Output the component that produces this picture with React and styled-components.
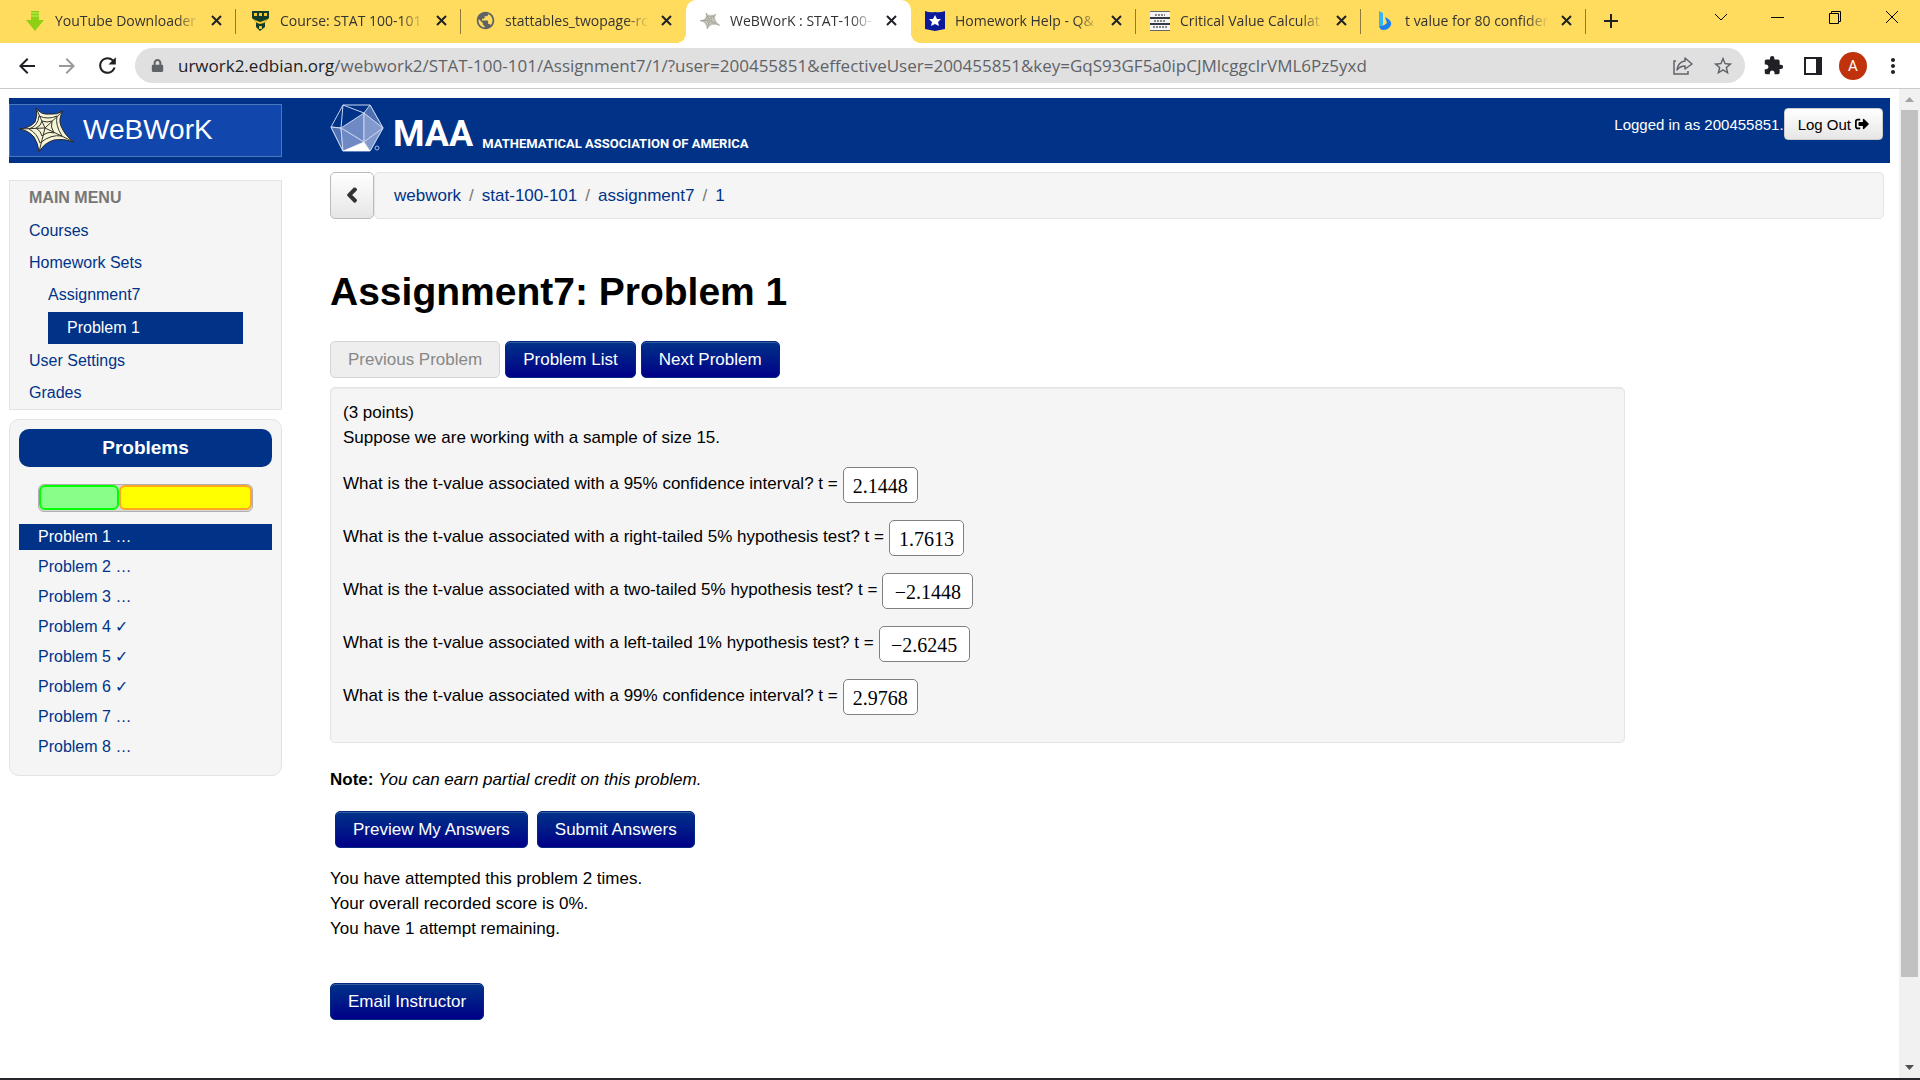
import React from 'react';
import styled, { createGlobalStyle, css } from 'styled-components';
import { FaChevronLeft, FaSignOutAlt, FaLock } from 'react-icons/fa';
import {
  MdArrowBack,
  MdArrowForward,
  MdRefresh,
  MdStarBorder,
  MdExtension,
  MdPublic,
  MdMoreVert,
  MdAdd
} from 'react-icons/md';

const GlobalStyle = createGlobalStyle`
  * {
    box-sizing: border-box;
  }
  body {
    margin: 0;
    background: white;
    color: black;
    font-family: 'Liberation Sans', Arial, sans-serif;
    font-size: 17px;
    line-height: 25px;
  }
  ul, ol, h1, h2, p {
    margin: 0;
    padding: 0;
    list-style: none;
  }
  a {
    color: #003388;
    text-decoration: none;
  }
  svg {
    display: block;
    flex-shrink: 0;
  }
`;

const Window = styled.div`
  display: flex;
  flex-direction: column;
  min-height: 100vh;
  border-bottom: 2px solid #26272b;
`;

/* Browser chrome */
const TabStrip = styled.div`
  display: flex;
  height: 43px;
  padding-left: 11px;
  background: #ffdc5e;
  font-family: 'Open Sans', sans-serif;
`;
const Tab = styled.div`
  position: relative;
  display: flex;
  align-items: center;
  flex: 0 1 225px;
  min-width: 0;
  padding: 0 11px 2px 14px;
  border-radius: 10px 10px 0 0;
  font-size: 14px;
  color: #333;
  ${props =>
    props.$active &&
    css`
      background: white;
      &::before,
      &::after {
        content: '';
        position: absolute;
        bottom: 0;
        width: 10px;
        height: 10px;
      }
      &::before {
        right: 100%;
        background: radial-gradient(circle at 0 0, transparent 10px, white 10px);
      }
      &::after {
        left: 100%;
        background: radial-gradient(
          circle at 100% 0,
          transparent 10px,
          white 10px
        );
      }
    `}
  ${props =>
    props.$divider &&
    css`
      &::after {
        content: '';
        position: absolute;
        right: 0;
        top: 9px;
        width: 1px;
        height: 25px;
        background: #8d7a38;
      }
    `}
`;
const TabIcon = styled.span`
  display: flex;
  justify-content: center;
  width: 20px;
  margin-right: 10px;
`;
const TabTitle = styled.span`
  flex: 1;
  min-width: 0;
  overflow: hidden;
  white-space: nowrap;
  mask-image: linear-gradient(to right, black 84%, transparent);
`;
const ChromeButton = styled.button`
  display: flex;
  align-items: center;
  justify-content: center;
  width: ${props => props.$width || 40}px;
  height: 34px;
  padding: 0;
  border: none;
  background: none;
  color: ${props => props.$color || '#202124'};
`;
const TabClose = styled(ChromeButton)`
  width: 18px;
  margin-left: 8px;
`;
const NewTab = styled(ChromeButton)`
  width: 50px;
  height: 42px;
`;
const WindowControls = styled.div`
  display: flex;
  margin-left: auto;
`;
const Toolbar = styled.div`
  display: flex;
  align-items: center;
  height: 46px;
  padding: 0 7px;
  border-bottom: 1px solid #c9c9c9;
`;
const AddressBar = styled.div`
  display: flex;
  align-items: center;
  flex: 1;
  min-width: 0;
  height: 35px;
  margin: 0 8px;
  padding: 0 2px 0 16px;
  border-radius: 18px;
  background: #e0e0e0;
  color: #5f6368;
`;
const Url = styled.span`
  flex: 1;
  min-width: 0;
  margin-left: 14px;
  overflow: hidden;
  white-space: nowrap;
  font-family: 'Open Sans', sans-serif;
  font-size: 17px;
  b {
    font-weight: 400;
    color: #202124;
  }
`;
const Avatar = styled.button`
  width: 28px;
  height: 28px;
  margin: 0 6px;
  padding: 0;
  border: none;
  border-radius: 50%;
  background: #c0320c;
  color: white;
  font-family: Roboto, sans-serif;
  font-size: 15px;
`;
const Viewport = styled.div`
  display: flex;
  flex: 1;
`;
const ScrollBar = styled.div`
  display: flex;
  flex-direction: column;
  align-items: center;
  width: 21px;
  background: #f1f1f1;
`;
const ScrollArrow = styled.span`
  display: flex;
  align-items: center;
  justify-content: center;
  height: 21px;
`;
const ScrollTrack = styled.div`
  flex: 1;
  width: 17px;
`;
const ScrollThumb = styled.div`
  height: 91.5%;
  background: #c1c1c1;
`;

/* Page */
const Page = styled.div`
  flex: 1;
  min-width: 0;
  padding: 9px 9px 0;
`;
const Masthead = styled.header`
  display: flex;
  height: 65px;
  padding-right: 7px;
  background: #003388;
`;
const Brand = styled.a`
  display: flex;
  align-items: center;
  align-self: center;
  gap: 8px;
  width: 273px;
  height: 53px;
  padding: 0 0 2px 9px;
  border: 1px solid #4a76bd;
  background: #1147ad;
  color: white;
  font-size: 28px;
`;
const Maa = styled.a`
  display: flex;
  align-items: flex-end;
  height: 54px;
  margin-left: 48px;
  color: white;
  font-family: Roboto, sans-serif;
  font-weight: 700;
`;
const MaaName = styled.span`
  margin: 0 9px 0 8px;
  font-size: 36px;
  line-height: 36px;
`;
const MaaTagline = styled.span`
  font-size: 13px;
  line-height: 17px;
  white-space: nowrap;
`;
const Session = styled.div`
  display: flex;
  align-items: center;
  height: 52px;
  margin-left: auto;
  color: white;
  font-size: 15px;
`;
const LogOut = styled.button`
  display: flex;
  align-items: center;
  gap: 4px;
  height: 32px;
  padding: 0 13px;
  border: 1px solid #ccc;
  border-radius: 4px;
  background: linear-gradient(to bottom, white, #e6e6e6);
  color: black;
  font-family: inherit;
  font-size: 15px;
`;
const Columns = styled.div`
  display: flex;
  gap: 48px;
`;
const Sidebar = styled.nav`
  display: flex;
  flex-direction: column;
  gap: 9px;
  flex: 0 0 273px;
  padding-top: 17px;
  font-size: 16px;
`;
const Panel = styled.section`
  border: 1px solid #e3e3e3;
  border-radius: ${props => (props.$rounded ? 10 : 0)}px;
  padding: ${props => (props.$rounded ? '9px 9px 15px' : 0)};
  background: #f5f5f5;
`;
const MenuTitle = styled.h2`
  padding-left: 19px;
  font-size: 16px;
  line-height: 34px;
  color: #777;
`;
const SubMenu = styled.ul`
  padding: ${props => (props.$deep ? '1px 0 0' : '0 0 1px')};
`;
const MenuLink = styled.a`
  display: block;
  margin-left: ${props => (props.$level ? 38 : 0)}px;
  margin-right: 38px;
  padding-left: ${props => (props.$level === 1 ? 0 : 19)}px;
  line-height: 32px;
  background: ${props => props.$active && '#003388'};
  color: ${props => props.$active && 'white'};
`;
const ProblemsTitle = styled.h2`
  border-radius: 10px;
  background: #003388;
  color: white;
  font-size: 19px;
  line-height: 38px;
  text-align: center;
`;
const Progress = styled.div`
  display: flex;
  height: 28px;
  margin: 17px 19px 12px;
  border: 1px solid #b0b0b0;
  border-radius: 6px;
  background: #d6d6d6;
`;
const ProgressPart = styled.div`
  height: 25px;
  border: 2px solid ${props => (props.$done ? '#00ff00' : '#ffa81f')};
  border-radius: 6px;
  background: ${props => (props.$done ? '#88ff88' : '#ffff00')};
`;
const ProblemLinks = styled.ul`
  display: flex;
  flex-direction: column;
  gap: 4px;
`;
const ProblemLink = styled.a`
  display: block;
  padding-left: 19px;
  line-height: 26px;
  background: ${props => props.$active && '#003388'};
  color: ${props => props.$active && 'white'};
`;
const Main = styled.main`
  flex: 1;
  min-width: 0;
  padding-top: 9px;
`;
const CrumbRow = styled.div`
  display: flex;
  height: 47px;
  padding-right: 6px;
`;
const BackButton = styled.button`
  display: flex;
  align-items: center;
  justify-content: center;
  width: 44px;
  padding: 0 0 2px;
  border: 1px solid #bbb;
  border-radius: 5px;
  background: linear-gradient(to bottom, white, #e6e6e6);
  color: #333;
`;
const Crumbs = styled.ol`
  display: flex;
  align-items: center;
  flex: 1;
  padding-left: 19px;
  border: 1px solid #e3e3e3;
  border-radius: 5px;
  background: #f5f5f5;
  li + li::before {
    content: '/';
    padding: 0 8px;
    color: #777;
  }
`;
const Title = styled.h1`
  margin: 48px 0 24px;
  font-size: 39px;
  line-height: 50px;
`;
const ButtonRow = styled.div`
  display: flex;
  gap: ${props => props.$gap || 5}px;
  padding-left: ${props => props.$indent || 0}px;
`;
const Button = styled.button`
  height: 37px;
  padding: 0 17px;
  border: 1px solid #002a80;
  border-radius: 5px;
  background: linear-gradient(to bottom, #003388, #000088);
  box-shadow: inset 0 1px 0 rgba(255, 255, 255, 0.2);
  color: white;
  font-family: inherit;
  font-size: 17px;
  line-height: 25px;
  &:disabled {
    border-color: #d4d4d4;
    background: #eee;
    box-shadow: none;
    color: #888;
  }
`;
const Well = styled.div`
  width: 83%;
  margin-top: 9px;
  padding: 12px 12px 27px;
  border: 1px solid #e3e3e3;
  border-radius: 5px;
  background: #f5f5f5;
  box-shadow: inset 0 1px 1px rgba(0, 0, 0, 0.05);
`;
const Questions = styled.div`
  display: flex;
  flex-direction: column;
  gap: 17px;
  padding-top: 17px;
`;
const Question = styled.div`
  display: flex;
  align-items: center;
  gap: 5px;
  label {
    padding-bottom: 3px;
  }
`;
const Answer = styled.input`
  width: ${props => (props.$wide ? 91 : 75)}px;
  height: 36px;
  padding: 2px 0 0;
  border: 1px solid #808080;
  border-radius: 5px;
  background: white;
  font-family: 'Liberation Serif', serif;
  font-size: 20px;
  text-align: center;
`;
const Note = styled.p`
  margin: 24px 0 19px;
`;
const Attempts = styled.p`
  margin: 18px 0 42px;
`;

const StarWeb = ({ size, faded }) => (
  <svg width={size} height={size} viewBox='0 0 56 46'>
    <path
      d='M17 1 Q22 8 30 7 Q38 8 44 4 Q39 12 42 19 Q46 29 55 35 Q44 31 35 33 Q25 36 20 45 Q19 36 15 30 Q9 23 0 22 Q11 21 16 15 Q19 8 17 1 Z'
      fill={faded ? '#d3d1c4' : '#f5f4d6'}
      stroke={faded ? '#8b8a80' : '#23262e'}
      strokeWidth='1'
      strokeLinejoin='round'
    />
    <g fill='none' stroke={faded ? '#77756a' : '#35352e'} strokeWidth='1'>
      <path d='M17 1 L26 21 L44 4 M55 35 L26 21 L20 45 M0 22 L26 21' />
      <path d='M20 9 Q29 13 38 9 Q36 18 43 29 Q32 27 21 36 Q18 26 10 22 Q19 19 20 9 Z' />
      <path d='M23 14 Q28 16 33 14 Q31 20 35 26 Q29 24 23 29 Q22 24 17 21 Q22 19 23 14 Z' />
    </g>
  </svg>
);

const Icosahedron = () => (
  <svg width='55' height='48' viewBox='0 0 55 48'>
    <g fill='#6f89c4' stroke='#c9d5ee' strokeLinejoin='round'>
      <path d='M13 1 L40 1 L53 24 L40 47 L13 47 L1 23 Z' fill='#003388' />
      <path d='M1 23 L11 24 L13 47 Z' fill='#4f70b3' />
      <path d='M11 24 L34 9 L34 38 Z' />
      <path d='M11 24 L34 38 L13 47 Z' />
      <path d='M34 9 L53 24 L34 38 Z' fill='#8299cd' />
      <path d='M53 24 L40 47 L34 38 Z' fill='#8299cd' />
      <path d='M34 9 L40 1 L53 24 Z' fill='#4f70b3' />
      <path d='M13 1 L34 9 M13 1 L11 24 M1 23 L11 24' fill='none' />
    </g>
    <path d='M34 38 L40 47 L13 47 Z' fill='white' />
    <circle cx='47' cy='44' r='2' fill='none' stroke='#a9b9dd' />
  </svg>
);

const DownloadIcon = () => (
  <svg width='18' height='20' viewBox='0 0 18 20'>
    <path d='M5 0 H13 V9 H18 L9 20 L0 9 H5 Z' fill='#8fd014' />
    <path d='M5 2 H13 M5 5 H13' stroke='#c5ee5a' />
  </svg>
);

const CrestIcon = () => (
  <svg width='17' height='20' viewBox='0 0 17 20'>
    <path d='M0 0 H17 V7 L13 11 V16 L8 20 L4 16 V11 L0 7 Z' fill='#123d2b' />
    <path d='M1 8 L8 11 L16 8 L12 12 L8 13 L5 12 Z' fill='#f5c72c' />
    <path
      d='M2 2 H5 V5 H2 Z M7 2 H10 V5 H7 Z M12 2 H15 V5 H12 Z M7 15 H10 V18 H7 Z'
      fill='#f5c72c'
    />
  </svg>
);

const ShieldIcon = () => (
  <svg width='20' height='20' viewBox='0 0 20 20'>
    <path d='M0 0 Q5 2 10 1 Q15 2 20 0 V18 L10 20 L0 18 Z' fill='#0a1a9a' />
    <path
      d='M10 4 L12 8 L16 8 L13 11 L14 15 L10 13 L6 15 L7 11 L4 8 L8 8 Z'
      fill='white'
    />
  </svg>
);

const StatsIcon = () => (
  <svg width='20' height='20' viewBox='0 0 20 20'>
    <path d='M0 0 H20 V20 H0Z' fill='#f4f4f4' />
    <path d='M0 0.5 H20 M0 19.5 H20' stroke='#666' />
    <path d='M0 7 H20 M0 13 H20' stroke='#333a44' strokeWidth='2' />
    <path
      d='M5 4 H15 M4 10 H16 M3 16 H17'
      stroke='#888'
      strokeWidth='2'
      strokeDasharray='2 1'
    />
  </svg>
);

const BingIcon = () => (
  <svg width='14' height='20' viewBox='0 0 14 20'>
    <path d='M1 0 L5 2 V13 L3 17 Q1 16 1 14 Z' fill='#37b6f5' />
    <path d='M7 6 Q14 9 13 14 Q11 19 5 19 Q2 19 1 15 Q5 16 9 12 Z' fill='#1b7ff0' />
  </svg>
);

const CloseIcon = () => (
  <svg width='11' height='11' viewBox='0 0 11 11' stroke='currentColor'>
    <path d='M1 1 L10 10 M10 1 L1 10' strokeWidth='2' />
  </svg>
);

const ShareIcon = () => (
  <svg
    width='20'
    height='20'
    viewBox='0 0 20 20'
    fill='none'
    stroke='currentColor'
    strokeWidth='1.5'
  >
    <path d='M3 5 H1 V18 H15 V15' />
    <path d='M12 2 L19 8 L12 13 V10 Q7 10 4 14 Q5 6 12 5 Z' strokeLinejoin='round' />
  </svg>
);

const PanelIcon = () => (
  <svg width='18' height='18' viewBox='0 0 18 18'>
    <path d='M1 1 H17 V17 H1 Z' fill='none' stroke='currentColor' strokeWidth='2' />
    <path d='M12 1 H17 V17 H12 Z' fill='currentColor' />
  </svg>
);

const LineIcon = ({ d }) => (
  <svg width='14' height='14' viewBox='0 0 14 14' fill='none' stroke='black'>
    <path d={d} />
  </svg>
);

const tabs = [
  { title: 'YouTube Downloader', icon: <DownloadIcon />, divider: true },
  { title: 'Course: STAT 100-101', icon: <CrestIcon />, divider: true },
  { title: 'stattables_twopage-rc', icon: <MdPublic size={21} color='#5f6368' /> },
  { title: 'WeBWorK : STAT-100-', icon: <StarWeb size={20} faded />, active: true },
  { title: 'Homework Help - Q&', icon: <ShieldIcon />, divider: true },
  { title: 'Critical Value Calculat', icon: <StatsIcon />, divider: true },
  { title: 't value for 80 confider', icon: <BingIcon />, divider: true }
];

const windowControls = [
  { label: 'Search tabs', d: 'M1 4 L7 10 L13 4' },
  { label: 'Minimise', d: 'M0 7.5 H13' },
  { label: 'Restore', d: 'M1.5 3.5 H10.5 V13.5 H1.5 Z M3.5 3.5 V1.5 H12.5 V11.5 H10.5' },
  { label: 'Close', d: 'M1 1 L13 13 M13 1 L1 13' }
];

const problems = ['…', '…', '…', '✓', '✓', '✓', '…', '…'];

const crumbs = ['webwork', 'stat-100-101', 'assignment7', '1'];

const questions = [
  { kind: '95% confidence interval', answer: '2.1448' },
  { kind: 'right-tailed 5% hypothesis test', answer: '1.7613' },
  { kind: 'two-tailed 5% hypothesis test', answer: '−2.1448' },
  { kind: 'left-tailed 1% hypothesis test', answer: '−2.6245' },
  { kind: '99% confidence interval', answer: '2.9768' }
];

const BrowserChrome = () => (
  <>
    <TabStrip>
      {tabs.map(tab => (
        <Tab key={tab.title} $active={tab.active} $divider={tab.divider}>
          <TabIcon>{tab.icon}</TabIcon>
          <TabTitle>{tab.title}</TabTitle>
          <TabClose aria-label='Close tab'>
            <CloseIcon />
          </TabClose>
        </Tab>
      ))}
      <NewTab aria-label='New tab'>
        <MdAdd size={24} />
      </NewTab>
      <WindowControls>
        {windowControls.map(control => (
          <ChromeButton key={control.label} aria-label={control.label} $width={57}>
            <LineIcon d={control.d} />
          </ChromeButton>
        ))}
      </WindowControls>
    </TabStrip>
    <Toolbar>
      <ChromeButton aria-label='Back'>
        <MdArrowBack size={24} />
      </ChromeButton>
      <ChromeButton aria-label='Forward' $color='#9a9a9a'>
        <MdArrowForward size={24} />
      </ChromeButton>
      <ChromeButton aria-label='Reload'>
        <MdRefresh size={25} />
      </ChromeButton>
      <AddressBar>
        <FaLock size={13} />
        <Url>
          <b>urwork2.edbian.org</b>
          /webwork2/STAT-100-101/Assignment7/1/?user=200455851&amp;effectiveUser=200455851&amp;key=GqS93GF5a0ipCJMlcggclrVML6Pz5yxd
        </Url>
        <ChromeButton aria-label='Share' $color='#5f6368'>
          <ShareIcon />
        </ChromeButton>
        <ChromeButton aria-label='Bookmark' $color='#5f6368'>
          <MdStarBorder size={22} />
        </ChromeButton>
      </AddressBar>
      <ChromeButton aria-label='Extensions'>
        <MdExtension size={21} />
      </ChromeButton>
      <ChromeButton aria-label='Side panel'>
        <PanelIcon />
      </ChromeButton>
      <Avatar>A</Avatar>
      <ChromeButton aria-label='Menu'>
        <MdMoreVert size={24} />
      </ChromeButton>
    </Toolbar>
  </>
);

const MainMenu = () => (
  <Panel>
    <MenuTitle>MAIN MENU</MenuTitle>
    <ul>
      <li>
        <MenuLink href='#'>Courses</MenuLink>
      </li>
      <li>
        <MenuLink href='#'>Homework Sets</MenuLink>
        <SubMenu>
          <li>
            <MenuLink href='#' $level={1}>
              Assignment7
            </MenuLink>
            <SubMenu $deep>
              <li>
                <MenuLink href='#' $level={2} $active>
                  Problem 1
                </MenuLink>
              </li>
            </SubMenu>
          </li>
        </SubMenu>
      </li>
      <li>
        <MenuLink href='#'>User Settings</MenuLink>
      </li>
      <li>
        <MenuLink href='#'>Grades</MenuLink>
      </li>
    </ul>
  </Panel>
);

const ProblemsPanel = () => {
  const done = problems.filter(status => status === '✓').length;
  const share = (done / problems.length) * 100;

  return (
    <Panel $rounded>
      <ProblemsTitle>Problems</ProblemsTitle>
      <Progress>
        <ProgressPart $done style={{ width: `${share}%` }} />
        <ProgressPart style={{ width: `${100 - share}%` }} />
      </Progress>
      <ProblemLinks>
        {problems.map((status, i) => (
          <li key={i}>
            <ProblemLink href='#' $active={i === 0}>
              Problem {i + 1} {status}
            </ProblemLink>
          </li>
        ))}
      </ProblemLinks>
    </Panel>
  );
};

const App = () => {
  const renderQuestions = () => {
    return questions.map(({ kind, answer }, i) => (
      <Question key={kind}>
        <label htmlFor={`answer-${i}`}>
          What is the t-value associated with a {kind}? t =
        </label>
        <Answer
          id={`answer-${i}`}
          defaultValue={answer}
          $wide={answer.length > 6}
        />
      </Question>
    ));
  };

  return (
    <Window>
      <GlobalStyle />
      <BrowserChrome />
      <Viewport>
        <Page>
          <Masthead>
            <Brand href='#'>
              <StarWeb size={56} />
              WeBWorK
            </Brand>
            <Maa href='#'>
              <Icosahedron />
              <MaaName>MAA</MaaName>
              <MaaTagline>MATHEMATICAL ASSOCIATION OF AMERICA</MaaTagline>
            </Maa>
            <Session>
              Logged in as 200455851.
              <LogOut>
                Log Out <FaSignOutAlt size={14} />
              </LogOut>
            </Session>
          </Masthead>
          <Columns>
            <Sidebar>
              <MainMenu />
              <ProblemsPanel />
            </Sidebar>
            <Main>
              <CrumbRow>
                <BackButton aria-label='Up'>
                  <FaChevronLeft size={16} strokeWidth={50} />
                </BackButton>
                <Crumbs>
                  {crumbs.map(crumb => (
                    <li key={crumb}>
                      <a href='#'>{crumb}</a>
                    </li>
                  ))}
                </Crumbs>
              </CrumbRow>
              <Title>Assignment7: Problem 1</Title>
              <ButtonRow>
                <Button disabled>Previous Problem</Button>
                <Button>Problem List</Button>
                <Button>Next Problem</Button>
              </ButtonRow>
              <Well>
                <p>(3 points)</p>
                <p>Suppose we are working with a sample of size 15.</p>
                <Questions>{renderQuestions()}</Questions>
              </Well>
              <Note>
                <b>Note:</b> <i>You can earn partial credit on this problem.</i>
              </Note>
              <ButtonRow $gap={9} $indent={5}>
                <Button>Preview My Answers</Button>
                <Button>Submit Answers</Button>
              </ButtonRow>
              <Attempts>
                You have attempted this problem 2 times.
                <br />
                Your overall recorded score is 0%.
                <br />
                You have 1 attempt remaining.
              </Attempts>
              <Button>Email Instructor</Button>
            </Main>
          </Columns>
        </Page>
        <ScrollBar>
          <ScrollArrow>
            <svg width='9' height='5' viewBox='0 0 9 5' fill='#a3a3a3'>
              <path d='M0 5 L4.5 0 L9 5Z' />
            </svg>
          </ScrollArrow>
          <ScrollTrack>
            <ScrollThumb />
          </ScrollTrack>
          <ScrollArrow>
            <svg width='9' height='5' viewBox='0 0 9 5' fill='#505050'>
              <path d='M0 0 L4.5 5 L9 0Z' />
            </svg>
          </ScrollArrow>
        </ScrollBar>
      </Viewport>
    </Window>
  );
};

export default App;
